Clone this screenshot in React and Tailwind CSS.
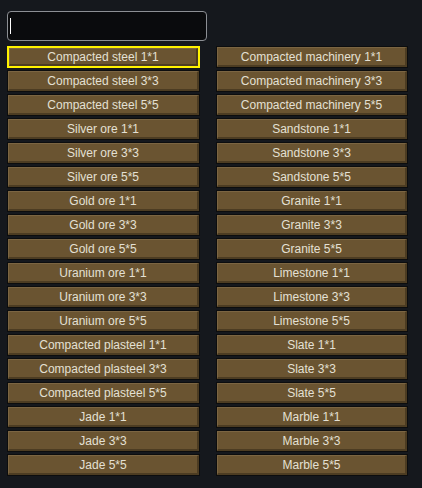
import React, { useState } from 'react';

const left = [
  'Compacted steel 1*1', 'Compacted steel 3*3', 'Compacted steel 5*5',
  'Silver ore 1*1', 'Silver ore 3*3', 'Silver ore 5*5',
  'Gold ore 1*1', 'Gold ore 3*3', 'Gold ore 5*5',
  'Uranium ore 1*1', 'Uranium ore 3*3', 'Uranium ore 5*5',
  'Compacted plasteel 1*1', 'Compacted plasteel 3*3', 'Compacted plasteel 5*5',
  'Jade 1*1', 'Jade 3*3', 'Jade 5*5',
];

const right = [
  'Compacted machinery 1*1', 'Compacted machinery 3*3', 'Compacted machinery 5*5',
  'Sandstone 1*1', 'Sandstone 3*3', 'Sandstone 5*5',
  'Granite 1*1', 'Granite 3*3', 'Granite 5*5',
  'Limestone 1*1', 'Limestone 3*3', 'Limestone 5*5',
  'Slate 1*1', 'Slate 3*3', 'Slate 5*5',
  'Marble 1*1', 'Marble 3*3', 'Marble 5*5',
];

function ItemButton({ label, selected, onClick }) {
  return (
    <button
      onClick={onClick}
      className={`h-[22px] w-full p-0 ${selected ? 'border-2 border-[#fff200]' : 'border border-[#0c0d0e]'}`}
    >
      <div className="h-full w-full flex items-center justify-center bg-[#6a5431] border-t border-l border-[#7b6542] border-b-2 border-r-2 border-b-[#4c3c22] border-r-[#4c3c22] text-[12px] leading-none text-[#e4e0d4] whitespace-nowrap">
        {label}
      </div>
    </button>
  );
}

export default function App() {
  const [selected, setSelected] = useState('Compacted steel 1*1');

  return (
    <div className="w-[422px] h-[488px] bg-[#15181d] pl-[7px] pt-[11px] font-['Liberation_Sans',sans-serif] overflow-hidden">
      <div className="w-[200px] h-[30px] rounded-[4px] border border-[#8c8f94] bg-[#0a0b0d] flex items-center pl-[2px]">
        <div className="w-px h-[16px] bg-white" />
      </div>
      <div className="mt-[5px] grid grid-cols-[193px_192px] gap-x-[16px]">
        <div className="flex flex-col gap-[2px]">
          {left.map(l => (
            <ItemButton key={l} label={l} selected={selected === l} onClick={() => setSelected(l)} />
          ))}
        </div>
        <div className="flex flex-col gap-[2px]">
          {right.map(l => (
            <ItemButton key={l} label={l} selected={selected === l} onClick={() => setSelected(l)} />
          ))}
        </div>
      </div>
    </div>
  );
}
